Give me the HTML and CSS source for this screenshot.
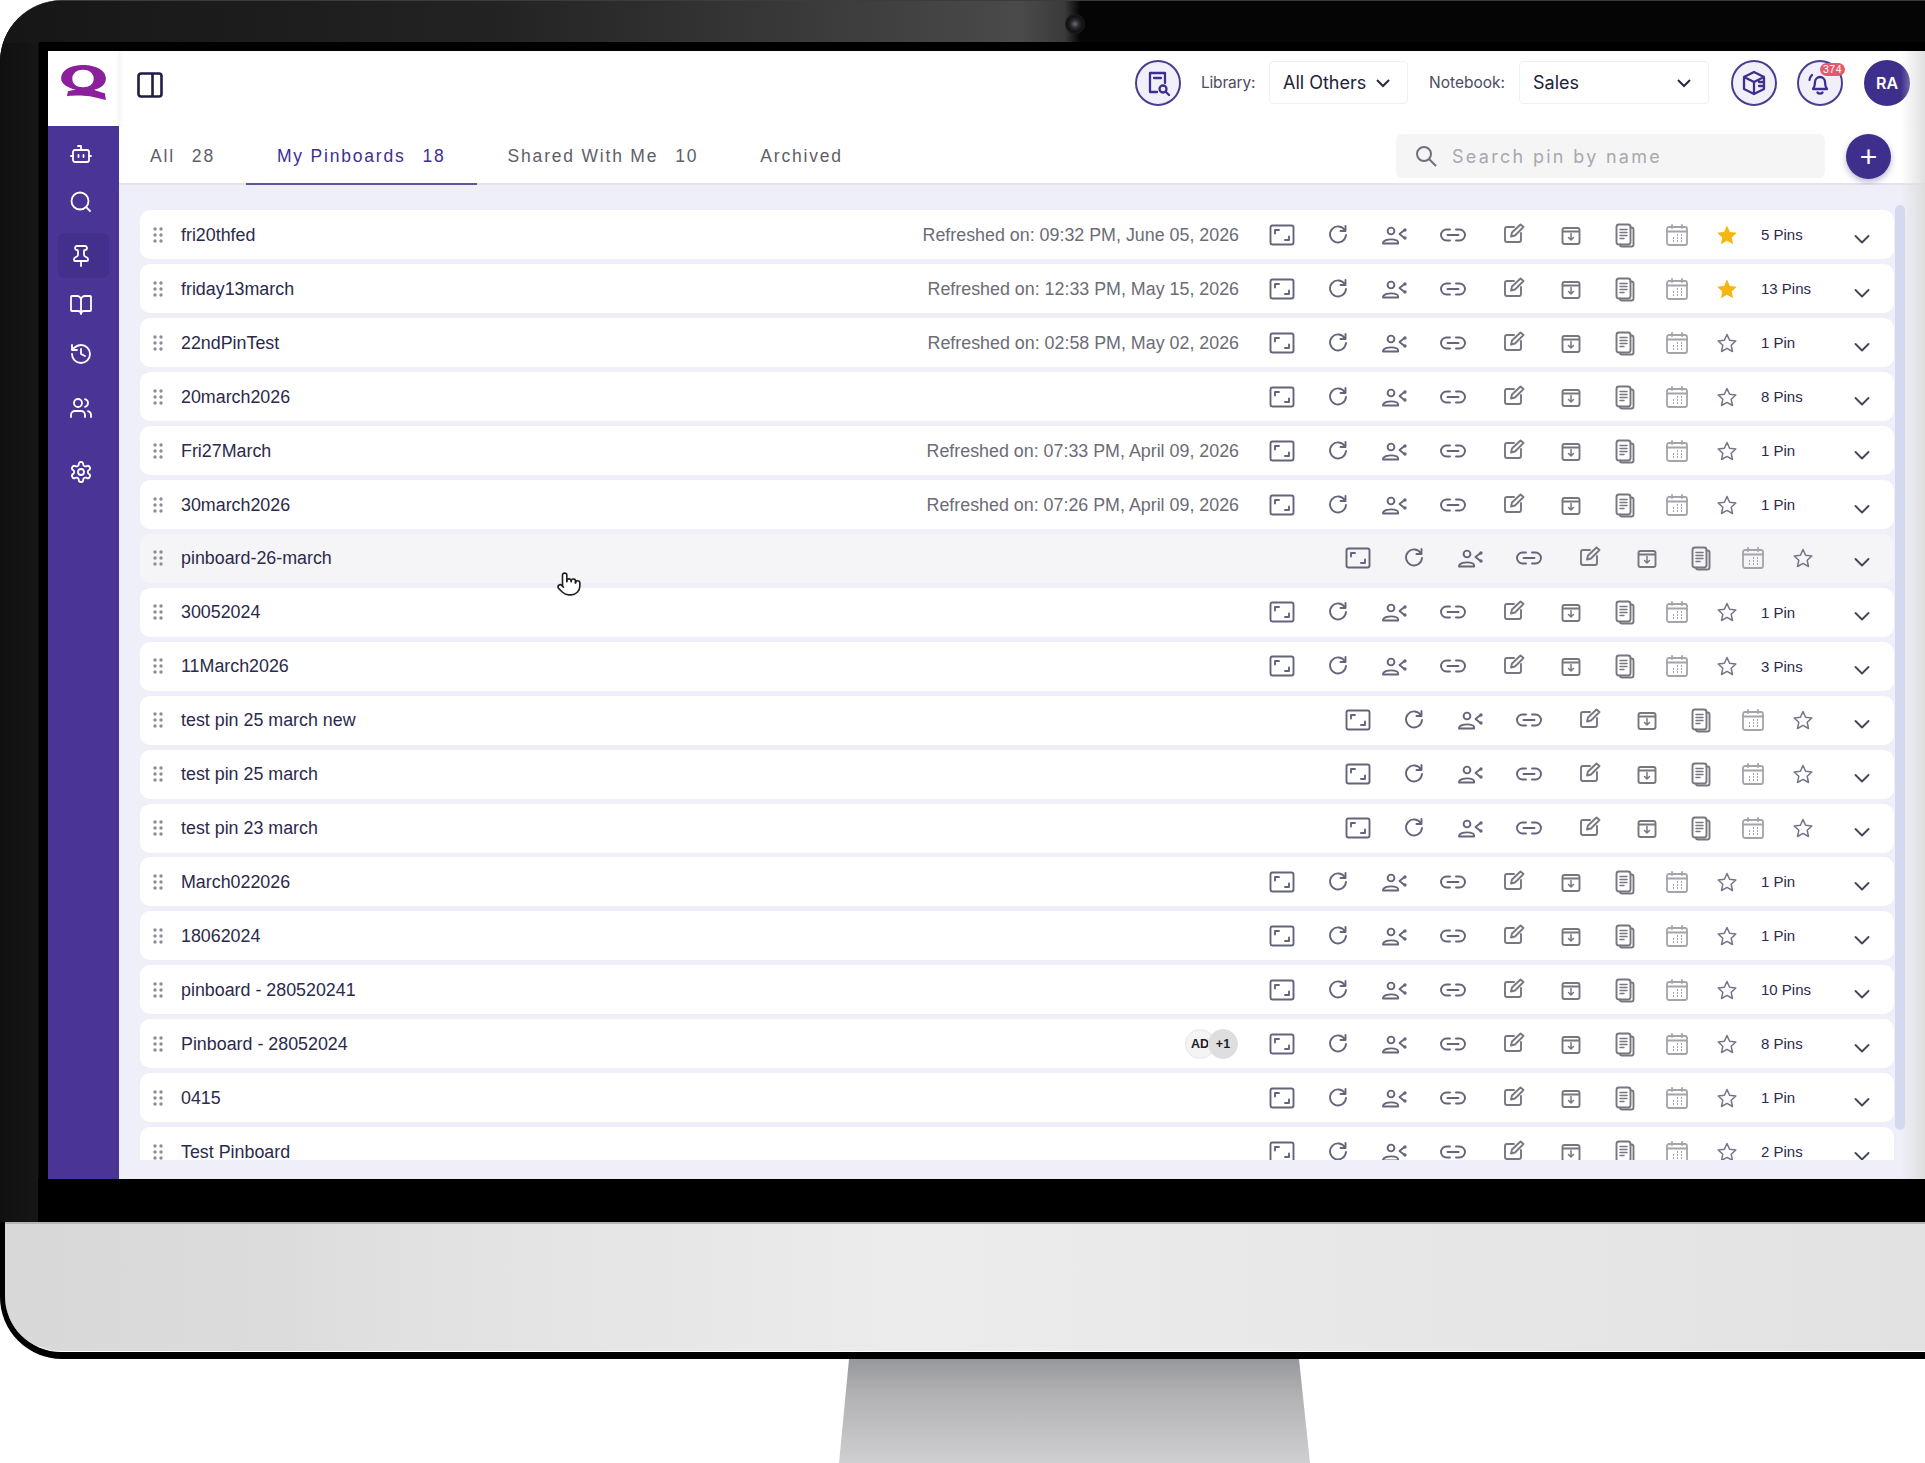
FILE: index.html
```html
<!DOCTYPE html>
<html lang="en">
<head>
<meta charset="utf-8">
<title>My Pinboards</title>
<link rel="stylesheet" href="styles.css">
</head>
<body>
<svg class="defs" aria-hidden="true">
  <symbol id="a" viewBox="0 0 28 28"><g class="s-dark"><rect x="2.500" y="4.500" width="23" height="19" rx="2"/><path d="M7 12.500V9h4M21 15.500V19h-4"/></g></symbol>
  <symbol id="b" viewBox="0 0 28 28"><g class="s-dark"><path d="M21 9.500A8 8 0 1 0 22 14"/><path d="M21.500 5v5h-5"/></g></symbol>
  <symbol id="c" viewBox="0 0 28 28"><g class="s-dark"><circle cx="11" cy="10" r="3.400"/><path d="M3 22.500c0-1 .2-1.500.8-2.100 1.500-1.400 4.300-2 7.200-2 2.400 0 4.400.4 5.900 1.100.8.400 1.200 1.300 1.200 2.100v.9z"/><path d="M24.500 9l-5 4 5 4"/><circle cx="25" cy="9" r=".7"/><circle cx="25" cy="17" r=".7"/></g></symbol>
  <symbol id="d" viewBox="0 0 28 28"><g class="s-dark"><path d="M11 8.500H7.500a5.500 5.500 0 0 0 0 11H11M17 8.500h3.500a5.500 5.500 0 0 1 0 11H17M8.500 14h11"/></g></symbol>
  <symbol id="e" viewBox="0 0 28 28"><g class="s-mid"><path d="M14 6H7a2 2 0 0 0-2 2v11a2 2 0 0 0 2 2h12a2 2 0 0 0 2-2v-7"/><path d="M11 15.500l1-4L20.500 3.500l3 2.500-8.500 8.500z"/></g></symbol>
  <symbol id="f" viewBox="0 0 28 28"><g class="s-mid"><rect x="5.500" y="7" width="17" height="16" rx="2"/><path d="M6 10.500h16"/><path class="thin" d="M14 12.500v6M11.500 16.500l2.500 2.500 2.500-2.500"/></g></symbol>
  <symbol id="g" viewBox="0 0 28 28"><g class="s-mid"><rect x="5.500" y="3.500" width="14" height="20" rx="2.500"/><path d="M19.500 6.500h1a2 2 0 0 1 2 2v15a2 2 0 0 1-2 2H11a2 2 0 0 1-2-2"/><path class="thin" d="M9 8.500h7M9 11.500h7M9 14.500h7M9 17.500h4"/></g></symbol>
  <symbol id="h" viewBox="0 0 28 28"><g class="s-light"><rect x="4" y="6" width="20" height="18" rx="2"/><path d="M4 10.500h20M9 4v3M19 4v3"/><path class="dots" d="M14 14h1M18 14h1M10 17h1M14 17h1M18 17h1M10 20h1M14 20h1M18 20h1"/></g></symbol>
  <symbol id="on" viewBox="0 0 28 28"><path class="star-on" d="M14 4.500l2.900 6.400 6.900.8-5.100 4.700 1.400 6.900L14 19.800l-6.100 3.500 1.400-6.900-5.100-4.700 6.900-.8z"/></symbol>
  <symbol id="off" viewBox="0 0 28 28"><path class="star-off" d="M14 5.500l2.600 5.800 6.200.7-4.600 4.300 1.300 6.200-5.500-3.100-5.500 3.100 1.300-6.200L5.200 12l6.200-.7z"/></symbol>
  <symbol id="v" viewBox="0 0 28 28"><path class="s-chev" d="M7.500 11l6.500 6.500 6.500-6.500"/></symbol>
  <symbol id="dr" viewBox="0 0 10 16"><g class="dots-fill"><circle cx="2" cy="2" r="1.700"/><circle cx="8" cy="2" r="1.700"/><circle cx="2" cy="8" r="1.700"/><circle cx="8" cy="8" r="1.700"/><circle cx="2" cy="14" r="1.700"/><circle cx="8" cy="14" r="1.700"/></g></symbol>
</svg>

<div class="page">
  <div class="monitor">
    <div class="bezel">
      <span class="camera"></span>
      <div class="screen">
        <div class="rail">
          <div class="logo">
            <svg viewBox="0 0 48 38" class="logo-mark"><path fill-rule="evenodd" d="M23.500 1C36 1 47 6 47 15c0 6-5 10-12 11.500 4 2 9 3 11 3.500l1 7c-7-2-14-4-23-4.500-6-.3-12 0-17 .5l1-5c3-1 6-1 8-1.500C8 24.500 1 20.500 1 15 1 6 11 1 23.500 1zM23.500 6c-6 0-11 3.500-11 9s4.500 9 11 9 11-3.500 11-9-5-9-11-9z"/></svg>
          </div>
          <nav class="side">
            <a class="nav"><svg viewBox="0 0 24 24"><path d="M12 8V4H9"/><rect x="4" y="8" width="16" height="12" rx="2"/><path d="M2 14h2M20 14h2M9.500 13v2M14.500 13v2"/></svg></a>
            <a class="nav"><svg viewBox="0 0 24 24"><circle cx="11" cy="11" r="8.500"/><path d="M21 21l-3.800-3.800"/></svg></a>
            <a class="nav active"><svg viewBox="0 0 24 24"><path d="M12 17v5M9 10.760a2 2 0 0 1-1.110 1.790l-1.780.9A2 2 0 0 0 5 15.240V16a1 1 0 0 0 1 1h12a1 1 0 0 0 1-1v-.76a2 2 0 0 0-1.110-1.790l-1.780-.9A2 2 0 0 1 15 10.760V7a1 1 0 0 1 1-1 2 2 0 0 0 0-4H8a2 2 0 0 0 0 4 1 1 0 0 1 1 1z"/></svg></a>
            <a class="nav"><svg viewBox="0 0 24 24"><path d="M12 7v14M3 18a1 1 0 0 1-1-1V4a1 1 0 0 1 1-1h5a4 4 0 0 1 4 4 4 4 0 0 1 4-4h5a1 1 0 0 1 1 1v13a1 1 0 0 1-1 1h-6a3 3 0 0 0-3 3 3 3 0 0 0-3-3z"/></svg></a>
            <a class="nav"><svg viewBox="0 0 24 24"><path d="M3 12a9 9 0 1 0 9-9 9.750 9.750 0 0 0-6.740 2.740L3 8M3 3v5h5M12 7v5l4 2"/></svg></a>
            <a class="nav"><svg viewBox="0 0 24 24"><path d="M16 21v-2a4 4 0 0 0-4-4H6a4 4 0 0 0-4 4v2M22 21v-2a4 4 0 0 0-3-3.870M16 3.130a4 4 0 0 1 0 7.750"/><circle cx="9" cy="7" r="4"/></svg></a>
            <a class="nav"><svg viewBox="0 0 24 24"><path d="M12.220 2h-.44a2 2 0 0 0-2 2v.18a2 2 0 0 1-1 1.730l-.43.25a2 2 0 0 1-2 0l-.15-.08a2 2 0 0 0-2.730.73l-.22.38a2 2 0 0 0 .73 2.730l.15.1a2 2 0 0 1 1 1.720v.51a2 2 0 0 1-1 1.740l-.15.09a2 2 0 0 0-.73 2.730l.22.38a2 2 0 0 0 2.730.73l.15-.08a2 2 0 0 1 2 0l.43.25a2 2 0 0 1 1 1.730V20a2 2 0 0 0 2 2h.44a2 2 0 0 0 2-2v-.18a2 2 0 0 1 1-1.730l.43-.25a2 2 0 0 1 2 0l.15.08a2 2 0 0 0 2.730-.73l.22-.39a2 2 0 0 0-.73-2.730l-.15-.08a2 2 0 0 1-1-1.740v-.5a2 2 0 0 1 1-1.740l.15-.09a2 2 0 0 0 .73-2.730l-.22-.38a2 2 0 0 0-2.730-.73l-.15.08a2 2 0 0 1-2 0l-.43-.25a2 2 0 0 1-1-1.730V4a2 2 0 0 0-2-2z"/><circle cx="12" cy="12" r="3"/></svg></a>
          </nav>
        </div>
        <div class="main">
          <header class="topbar">
            <svg class="toggle" viewBox="0 0 26 26"><rect x="1.500" y="1.500" width="23" height="23" rx="2.500"/><path d="M15.500 1.500v23"/></svg>
            <div class="tools">
              <button class="round"><svg viewBox="0 0 28 28"><path d="M13 23H6V4h15v10"/><path d="M10 9h7"/><circle cx="19" cy="20" r="3.500"/><path d="M22 23l3 3"/></svg></button>
              <span class="label lib">Library:</span>
              <div class="select sel-lib"><span>All Others</span><svg viewBox="0 0 16 10"><path d="M2 2l6 6 6-6"/></svg></div>
              <span class="label nb">Notebook:</span>
              <div class="select sel-nb"><span>Sales</span><svg viewBox="0 0 16 10"><path d="M2 2l6 6 6-6"/></svg></div>
              <button class="round"><svg viewBox="0 0 28 28"><path d="M14 3l10 5v12l-10 5-10-5V8zM4 8l10 5 10-5M14 13v12M19 13h5M19 17h5"/></svg></button>
              <button class="round"><svg viewBox="0 0 28 28"><path d="M7 20c1.500-2 2-3 2-7a5 5 0 0 1 10 0c0 4 .5 5 2 7zM11.500 23.500c1 1.500 4 1.500 5 0M6 6c-1.500 1.500-2.500 3-2.500 5"/></svg><b class="badge">374</b></button>
              <button class="round avatar">RA</button>
            </div>
          </header>
          <div class="tabs">
            <a class="tab">All<em>28</em></a>
            <a class="tab current">My Pinboards<em>18</em></a>
            <a class="tab">Shared With Me<em>10</em></a>
            <a class="tab">Archived</a>
            <div class="search">
              <svg viewBox="0 0 24 24"><circle cx="10" cy="10" r="7"/><path d="M15 15l7 7"/></svg>
              <span>Search pin by name</span>
            </div>
            <button class="add">+</button>
          </div>
          <div class="content">
            <div class="list">
              <div class="row"><svg class="drag"><use href="#dr"/></svg><span class="name">fri20thfed</span><span class="ref">Refreshed on: 09:32 PM, June 05, 2026</span><div class="acts"><span><svg><use href="#a"/></svg></span><span><svg><use href="#b"/></svg></span><span><svg><use href="#c"/></svg></span><span><svg><use href="#d"/></svg></span><span><svg><use href="#e"/></svg></span><span><svg><use href="#f"/></svg></span><span><svg><use href="#g"/></svg></span><span><svg><use href="#h"/></svg></span><span><svg><use href="#on"/></svg></span></div><span class="pins">5 Pins</span><span class="chev"><svg><use href="#v"/></svg></span></div>
              <div class="row"><svg class="drag"><use href="#dr"/></svg><span class="name">friday13march</span><span class="ref">Refreshed on: 12:33 PM, May 15, 2026</span><div class="acts"><span><svg><use href="#a"/></svg></span><span><svg><use href="#b"/></svg></span><span><svg><use href="#c"/></svg></span><span><svg><use href="#d"/></svg></span><span><svg><use href="#e"/></svg></span><span><svg><use href="#f"/></svg></span><span><svg><use href="#g"/></svg></span><span><svg><use href="#h"/></svg></span><span><svg><use href="#on"/></svg></span></div><span class="pins">13 Pins</span><span class="chev"><svg><use href="#v"/></svg></span></div>
              <div class="row"><svg class="drag"><use href="#dr"/></svg><span class="name">22ndPinTest</span><span class="ref">Refreshed on: 02:58 PM, May 02, 2026</span><div class="acts"><span><svg><use href="#a"/></svg></span><span><svg><use href="#b"/></svg></span><span><svg><use href="#c"/></svg></span><span><svg><use href="#d"/></svg></span><span><svg><use href="#e"/></svg></span><span><svg><use href="#f"/></svg></span><span><svg><use href="#g"/></svg></span><span><svg><use href="#h"/></svg></span><span><svg><use href="#off"/></svg></span></div><span class="pins">1 Pin</span><span class="chev"><svg><use href="#v"/></svg></span></div>
              <div class="row"><svg class="drag"><use href="#dr"/></svg><span class="name">20march2026</span><div class="acts"><span><svg><use href="#a"/></svg></span><span><svg><use href="#b"/></svg></span><span><svg><use href="#c"/></svg></span><span><svg><use href="#d"/></svg></span><span><svg><use href="#e"/></svg></span><span><svg><use href="#f"/></svg></span><span><svg><use href="#g"/></svg></span><span><svg><use href="#h"/></svg></span><span><svg><use href="#off"/></svg></span></div><span class="pins">8 Pins</span><span class="chev"><svg><use href="#v"/></svg></span></div>
              <div class="row"><svg class="drag"><use href="#dr"/></svg><span class="name">Fri27March</span><span class="ref">Refreshed on: 07:33 PM, April 09, 2026</span><div class="acts"><span><svg><use href="#a"/></svg></span><span><svg><use href="#b"/></svg></span><span><svg><use href="#c"/></svg></span><span><svg><use href="#d"/></svg></span><span><svg><use href="#e"/></svg></span><span><svg><use href="#f"/></svg></span><span><svg><use href="#g"/></svg></span><span><svg><use href="#h"/></svg></span><span><svg><use href="#off"/></svg></span></div><span class="pins">1 Pin</span><span class="chev"><svg><use href="#v"/></svg></span></div>
              <div class="row"><svg class="drag"><use href="#dr"/></svg><span class="name">30march2026</span><span class="ref">Refreshed on: 07:26 PM, April 09, 2026</span><div class="acts"><span><svg><use href="#a"/></svg></span><span><svg><use href="#b"/></svg></span><span><svg><use href="#c"/></svg></span><span><svg><use href="#d"/></svg></span><span><svg><use href="#e"/></svg></span><span><svg><use href="#f"/></svg></span><span><svg><use href="#g"/></svg></span><span><svg><use href="#h"/></svg></span><span><svg><use href="#off"/></svg></span></div><span class="pins">1 Pin</span><span class="chev"><svg><use href="#v"/></svg></span></div>
              <div class="row hover"><svg class="drag"><use href="#dr"/></svg><span class="name">pinboard-26-march</span><div class="acts"><span><svg><use href="#a"/></svg></span><span><svg><use href="#b"/></svg></span><span><svg><use href="#c"/></svg></span><span><svg><use href="#d"/></svg></span><span><svg><use href="#e"/></svg></span><span><svg><use href="#f"/></svg></span><span><svg><use href="#g"/></svg></span><span><svg><use href="#h"/></svg></span><span><svg><use href="#off"/></svg></span></div><span class="chev"><svg><use href="#v"/></svg></span>
                <svg class="cursor" viewBox="0 0 24 24"><path class="cursor-fill" d="M6 14V4a2 2 0 0 1 4 0v5.500a2 2 0 0 1 4-.5 2 2 0 0 1 4 1v1a2 2 0 1 1 4 0v3a8 8 0 0 1-8 8h-2c-2.800 0-4.500-.860-5.990-2.340l-3.600-3.600a2 2 0 0 1 2.830-2.820L7 15z"/><path d="M10 10V9M14 10V9M18 11v-1"/></svg>
              </div>
              <div class="row"><svg class="drag"><use href="#dr"/></svg><span class="name">30052024</span><div class="acts"><span><svg><use href="#a"/></svg></span><span><svg><use href="#b"/></svg></span><span><svg><use href="#c"/></svg></span><span><svg><use href="#d"/></svg></span><span><svg><use href="#e"/></svg></span><span><svg><use href="#f"/></svg></span><span><svg><use href="#g"/></svg></span><span><svg><use href="#h"/></svg></span><span><svg><use href="#off"/></svg></span></div><span class="pins">1 Pin</span><span class="chev"><svg><use href="#v"/></svg></span></div>
              <div class="row"><svg class="drag"><use href="#dr"/></svg><span class="name">11March2026</span><div class="acts"><span><svg><use href="#a"/></svg></span><span><svg><use href="#b"/></svg></span><span><svg><use href="#c"/></svg></span><span><svg><use href="#d"/></svg></span><span><svg><use href="#e"/></svg></span><span><svg><use href="#f"/></svg></span><span><svg><use href="#g"/></svg></span><span><svg><use href="#h"/></svg></span><span><svg><use href="#off"/></svg></span></div><span class="pins">3 Pins</span><span class="chev"><svg><use href="#v"/></svg></span></div>
              <div class="row"><svg class="drag"><use href="#dr"/></svg><span class="name">test pin 25 march new</span><div class="acts"><span><svg><use href="#a"/></svg></span><span><svg><use href="#b"/></svg></span><span><svg><use href="#c"/></svg></span><span><svg><use href="#d"/></svg></span><span><svg><use href="#e"/></svg></span><span><svg><use href="#f"/></svg></span><span><svg><use href="#g"/></svg></span><span><svg><use href="#h"/></svg></span><span><svg><use href="#off"/></svg></span></div><span class="chev"><svg><use href="#v"/></svg></span></div>
              <div class="row"><svg class="drag"><use href="#dr"/></svg><span class="name">test pin 25 march</span><div class="acts"><span><svg><use href="#a"/></svg></span><span><svg><use href="#b"/></svg></span><span><svg><use href="#c"/></svg></span><span><svg><use href="#d"/></svg></span><span><svg><use href="#e"/></svg></span><span><svg><use href="#f"/></svg></span><span><svg><use href="#g"/></svg></span><span><svg><use href="#h"/></svg></span><span><svg><use href="#off"/></svg></span></div><span class="chev"><svg><use href="#v"/></svg></span></div>
              <div class="row"><svg class="drag"><use href="#dr"/></svg><span class="name">test pin 23 march</span><div class="acts"><span><svg><use href="#a"/></svg></span><span><svg><use href="#b"/></svg></span><span><svg><use href="#c"/></svg></span><span><svg><use href="#d"/></svg></span><span><svg><use href="#e"/></svg></span><span><svg><use href="#f"/></svg></span><span><svg><use href="#g"/></svg></span><span><svg><use href="#h"/></svg></span><span><svg><use href="#off"/></svg></span></div><span class="chev"><svg><use href="#v"/></svg></span></div>
              <div class="row"><svg class="drag"><use href="#dr"/></svg><span class="name">March022026</span><div class="acts"><span><svg><use href="#a"/></svg></span><span><svg><use href="#b"/></svg></span><span><svg><use href="#c"/></svg></span><span><svg><use href="#d"/></svg></span><span><svg><use href="#e"/></svg></span><span><svg><use href="#f"/></svg></span><span><svg><use href="#g"/></svg></span><span><svg><use href="#h"/></svg></span><span><svg><use href="#off"/></svg></span></div><span class="pins">1 Pin</span><span class="chev"><svg><use href="#v"/></svg></span></div>
              <div class="row"><svg class="drag"><use href="#dr"/></svg><span class="name">18062024</span><div class="acts"><span><svg><use href="#a"/></svg></span><span><svg><use href="#b"/></svg></span><span><svg><use href="#c"/></svg></span><span><svg><use href="#d"/></svg></span><span><svg><use href="#e"/></svg></span><span><svg><use href="#f"/></svg></span><span><svg><use href="#g"/></svg></span><span><svg><use href="#h"/></svg></span><span><svg><use href="#off"/></svg></span></div><span class="pins">1 Pin</span><span class="chev"><svg><use href="#v"/></svg></span></div>
              <div class="row"><svg class="drag"><use href="#dr"/></svg><span class="name">pinboard - 280520241</span><div class="acts"><span><svg><use href="#a"/></svg></span><span><svg><use href="#b"/></svg></span><span><svg><use href="#c"/></svg></span><span><svg><use href="#d"/></svg></span><span><svg><use href="#e"/></svg></span><span><svg><use href="#f"/></svg></span><span><svg><use href="#g"/></svg></span><span><svg><use href="#h"/></svg></span><span><svg><use href="#off"/></svg></span></div><span class="pins">10 Pins</span><span class="chev"><svg><use href="#v"/></svg></span></div>
              <div class="row"><svg class="drag"><use href="#dr"/></svg><span class="name">Pinboard - 28052024</span><div class="chips"><span class="chip">AD</span><span class="chip more">+1</span></div><div class="acts"><span><svg><use href="#a"/></svg></span><span><svg><use href="#b"/></svg></span><span><svg><use href="#c"/></svg></span><span><svg><use href="#d"/></svg></span><span><svg><use href="#e"/></svg></span><span><svg><use href="#f"/></svg></span><span><svg><use href="#g"/></svg></span><span><svg><use href="#h"/></svg></span><span><svg><use href="#off"/></svg></span></div><span class="pins">8 Pins</span><span class="chev"><svg><use href="#v"/></svg></span></div>
              <div class="row"><svg class="drag"><use href="#dr"/></svg><span class="name">0415</span><div class="acts"><span><svg><use href="#a"/></svg></span><span><svg><use href="#b"/></svg></span><span><svg><use href="#c"/></svg></span><span><svg><use href="#d"/></svg></span><span><svg><use href="#e"/></svg></span><span><svg><use href="#f"/></svg></span><span><svg><use href="#g"/></svg></span><span><svg><use href="#h"/></svg></span><span><svg><use href="#off"/></svg></span></div><span class="pins">1 Pin</span><span class="chev"><svg><use href="#v"/></svg></span></div>
              <div class="row"><svg class="drag"><use href="#dr"/></svg><span class="name">Test Pinboard</span><div class="acts"><span><svg><use href="#a"/></svg></span><span><svg><use href="#b"/></svg></span><span><svg><use href="#c"/></svg></span><span><svg><use href="#d"/></svg></span><span><svg><use href="#e"/></svg></span><span><svg><use href="#f"/></svg></span><span><svg><use href="#g"/></svg></span><span><svg><use href="#h"/></svg></span><span><svg><use href="#off"/></svg></span></div><span class="pins">2 Pins</span><span class="chev"><svg><use href="#v"/></svg></span></div>
            </div>
            <span class="scrollbar"></span>
          </div>
          <span class="glare"></span>
        </div>
      </div>
    </div>
    <div class="chin"></div>
  </div>
  <div class="stand"></div>
</div>
</body>
</html>
```

FILE: styles.css
```css
* { box-sizing: border-box; }
html, body { margin: 0; background: #fff; }
body { font-family: "Liberation Sans", Arial, sans-serif; color: #2b2a4c; }
.defs { position: absolute; width: 0; height: 0; }
.page { width: 1925px; height: 1463px; overflow: hidden; }

/* monitor */
.monitor { height: 1359px; background: #000; border-radius: 62px 0 0 62px; overflow: hidden; padding-bottom: 7px; display: flex; flex-direction: column; border-top: 1px solid #3c3c3c; }
.bezel { position: relative; flex: none; height: 1221px; padding: 50px 0 43px 48px;
  background:
    linear-gradient(#000, #000) 38px 100% / 100% 44px no-repeat,
    linear-gradient(90deg, #101010, #161616 38px, #0c0c0c 38px) 0 0 / 100% 100% no-repeat; }
.bezel::before { content: ""; position: absolute; left: 0; top: 0; width: 100%; height: 42px; background: linear-gradient(90deg, #161616 0, #232323 500px, #4a4a4a 1020px, #3a3a3a 1065px, #050505 1080px, #050505 100%); }
.camera { position: absolute; left: 1065px; top: 13px; width: 20px; height: 20px; border-radius: 50%; background: radial-gradient(circle, #6a6a70 0, #2a2a2e 30%, #111 55%, #333 100%); }
.screen { position: relative; height: 1128px; display: flex; box-shadow: 0 0 0 9px #000; background: #fff; }
.chin { flex: 1; margin-left: 5px; border-top: 2px solid #b5b5b5; border-bottom: 1.5px solid #fff; border-radius: 0 0 0 56px; background: linear-gradient(90deg, #d8d8d8 0, #dcdcdc 280px, #e0e1e0 400px, #ececec 900px, #e8e8e8 1300px, #e2e2e2 100%); }
.stand { width: 471px; height: 104px; margin-left: 839px; clip-path: polygon(10px 0, 460px 0, 471px 100%, 0 100%); background: linear-gradient(#97989d, #b2b2b4 35%, #cfcfd1); }

/* rail */
.rail { width: 71px; display: flex; flex-direction: column; flex: none; }
.logo { height: 75px; background: #fff; padding: 13px 0 0 12px; }
.logo-mark { width: 47px; height: 37px; display: block; fill: #8c1f9b; }
.side { flex: 1; background: #4a3596; padding: 8px 10px 0; display: flex; flex-direction: column; }
.nav { height: 40px; display: flex; align-items: center; justify-content: center; border-radius: 6px; padding-right: 6px; }
.nav svg { width: 24px; height: 24px; fill: none; stroke: #fff; stroke-width: 1.800; stroke-linecap: round; stroke-linejoin: round; }
.nav:nth-child(2) { margin-top: 8px; }
.nav:nth-child(3) { margin-top: 11px; height: 45px; }
.nav:nth-child(4) { margin-top: 7px; }
.nav:nth-child(5) { margin-top: 9px; }
.nav:nth-child(6) { margin-top: 14px; }
.nav:nth-child(7) { margin-top: 24px; }
.active { background: #43308c; }

/* main */
.main { position: relative; flex: 1; min-width: 0; min-height: 0; display: flex; flex-direction: column; }
.glare { position: absolute; right: 0; top: 0; bottom: 0; width: 24px; background: linear-gradient(90deg, rgba(225,225,225,0), rgba(220,220,220,.9)); pointer-events: none; }
.topbar { height: 76px; flex: none; display: flex; align-items: flex-start; justify-content: space-between; padding: 9px 15px 0 18px; background: #fff; box-shadow: 0 2px 5px rgba(120,120,150,.12), inset 4px 0 5px -3px rgba(120,120,150,.12); position: relative; }
.toggle { width: 26px; height: 26px; margin-top: 12px; fill: none; stroke: #1f1c45; stroke-width: 2.600; }
.tools { display: flex; align-items: flex-start; font-family: Inter, "Liberation Sans", sans-serif; }
.round { position: relative; width: 46px; height: 46px; padding: 0; border-radius: 50%; border: 2px solid #4a3d90; background: #f1f0fa; display: flex; align-items: center; justify-content: center; margin-left: 20px; }
.round svg { width: 28px; height: 28px; fill: none; stroke: #3d2f8f; stroke-width: 2.300; stroke-linejoin: round; stroke-linecap: round; }
.tools .round:first-child { margin-left: 0; }
.tools .avatar { margin-left: 21px; background: #3f2f8c; border-color: #3f2f8c; color: #fff; font: 600 16px Inter, sans-serif; }
.badge { position: absolute; left: 21px; top: 1px; width: 25px; height: 13px; border-radius: 7px; background: #e25a6b; color: #fff; font: 400 10.500px/13px "Liberation Sans", sans-serif; letter-spacing: .5px; text-align: center; }
.label { margin-top: 14px; font-size: 15.500px; line-height: 18px; color: #4c4b63; white-space: nowrap; }
.lib { width: 55px; margin-left: 20px; letter-spacing: -.2px; }
.nb { width: 78px; margin-left: 21px; }
.select { height: 43px; margin-top: 1px; margin-left: 13px; display: flex; align-items: center; justify-content: space-between; border: 1.500px solid #f0f0f2; border-radius: 4px; padding: 0 16px 0 13px; font-size: 18px; color: #23223a; }
.select svg { width: 16px; height: 10px; fill: none; stroke: #2b2a40; stroke-width: 2; }
.sel-lib { width: 139px; }
.sel-nb { width: 190px; margin-left: 12px; }
.tools .sel-nb + .round { margin-left: 22px; }

/* tabs */
.tabs { position: relative; height: 58px; flex: none; display: flex; align-items: stretch; background: #fff; box-shadow: inset 0 -2px #e4e4ea; padding-right: 34px; }
.tab { display: flex; align-items: center; padding: 1px 31px 0; font-size: 17.500px; letter-spacing: 1.800px; color: #5e5e68; white-space: nowrap; height: 58px; }
.tab em { font-style: normal; margin-left: 17px; }
.current { color: #3d2f8f; box-shadow: inset 0 -2px #5e53a0; }
.search { margin: 7px 0 0 auto; width: 429px; height: 44px; display: flex; align-items: center; background: #f5f5f6; border-radius: 6px; padding-left: 18px; font: 400 18px Inter, sans-serif; letter-spacing: 2.300px; color: #a8a8ae; }
.search svg { width: 24px; height: 24px; margin-right: 14px; fill: none; stroke: #6f6f7c; stroke-width: 2; }
.add { margin: 7px 0 0 21px; width: 45px; height: 45px; padding: 0; border: 0; border-radius: 50%; background: #3f2f8c; color: #fff; font: 400 30px/42px "Liberation Sans", sans-serif; box-shadow: 0 3px 6px rgba(60,50,120,.35); position: relative; }

/* list */
.content { position: relative; flex: 1; min-height: 0; background: #eeeff8; padding-bottom: 19px; }
.list { height: 100%; overflow: hidden; padding: 25.400px 31px 0 21px; display: flex; flex-direction: column; gap: 4.930px; }
.row { flex: 0 0 49px; display: flex; align-items: center; background: #fff; border-radius: 10px; padding-left: 13px; }
.hover { background: #f5f5f7; position: relative; }
.drag { width: 10px; height: 16px; margin-right: 18px; flex: none; }
.dots-fill { fill: #8d8d99; }
.name { flex: 1; padding-top: 1px; font-size: 17.850px; color: #2b2a4c; white-space: nowrap; }
.ref { margin-right: 15px; padding-top: 1px; font-size: 17.850px; color: #6c6c76; white-space: nowrap; }
.chips { display: flex; margin-right: 16px; }
.chip { width: 30px; height: 30px; border-radius: 50%; background: #f4f4f5; border: 1px solid #e6e6e8; font-size: 12.500px; font-weight: 700; color: #1d1d25; display: flex; align-items: center; justify-content: center; }
.more { margin-left: -7px; background: #dedede; border-color: #dedede; }
.acts { display: flex; flex: none; }
.acts span { width: 56px; height: 28px; display: flex; justify-content: center; }
.acts span:nth-child(4) { width: 62px; }
.acts span:nth-child(5) { width: 60px; }
.acts span:nth-child(6), .acts span:nth-child(7) { width: 54px; }
.acts span:nth-child(8), .acts span:nth-child(9) { width: 50px; }
.acts svg, .chev svg { width: 28px; height: 28px; display: block; }
.s-dark, .s-mid, .s-light, .s-chev { fill: none; stroke-width: 1.900; stroke-linecap: round; stroke-linejoin: round; }
.s-dark { stroke: #64647a; }
.s-mid { stroke: #77777f; }
.s-light { stroke: #a4a4aa; stroke-width: 1.800; }
.thin { stroke-width: 1.500; }
.dots { stroke-width: 1.800; stroke-linecap: butt; }
.s-chev { stroke: #45455a; }
.star-on { fill: #f5b60f; }
.star-off { fill: none; stroke: #74748a; stroke-width: 1.500; stroke-linejoin: round; }
.pins { width: 76px; padding-left: 9px; flex: none; font-size: 15px; color: #2b2a4c; white-space: nowrap; }
.chev { width: 66px; flex: none; display: flex; justify-content: center; margin-top: 8px; padding-left: 2px; }
.scrollbar { position: absolute; left: 1776px; top: 20px; width: 10px; height: 925px; border-radius: 5px; background: #d5d9f0; }
.cursor { position: absolute; left: 416px; top: 37px; width: 26px; height: 26px; fill: none; stroke: #222; stroke-width: 1.500; stroke-linecap: round; stroke-linejoin: round; }
.cursor-fill { fill: #fff; }
```
